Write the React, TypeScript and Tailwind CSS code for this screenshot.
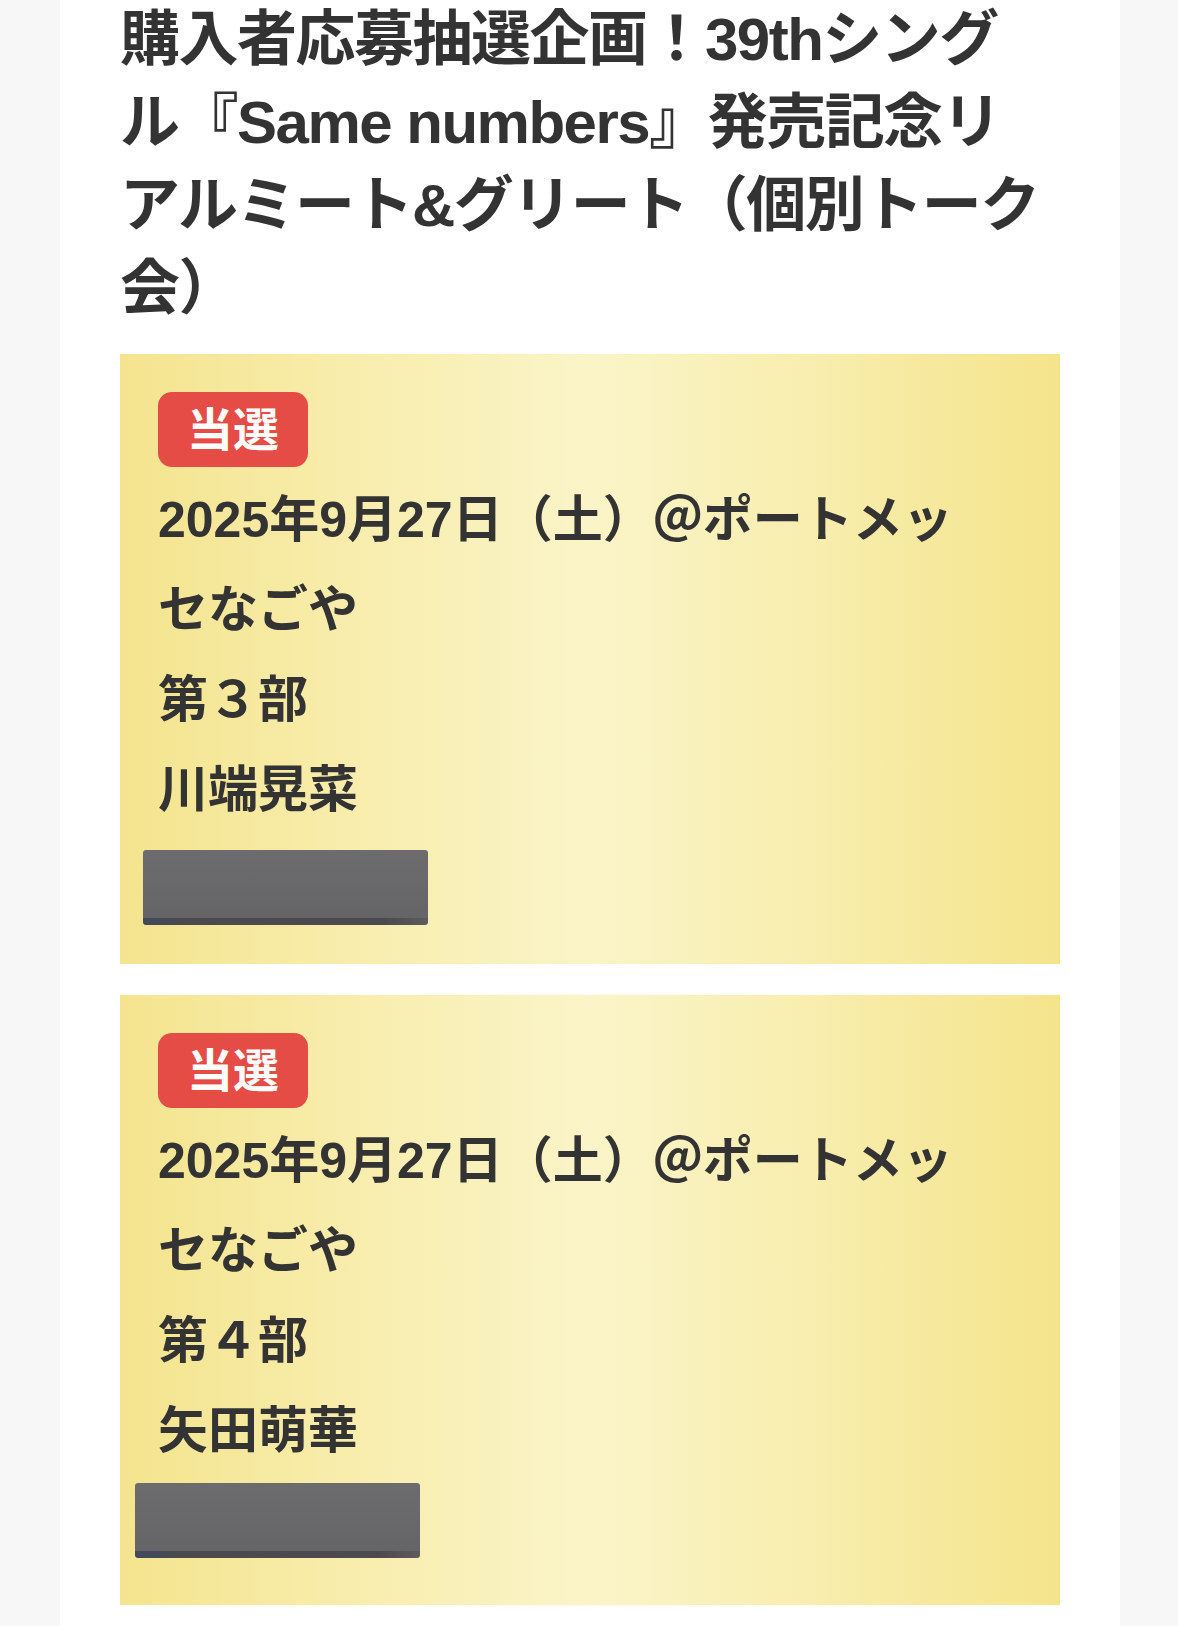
import React from "react";

const FONT = "font-['Liberation_Sans','Noto_Sans_CJK_JP',sans-serif]";

function Card({
  part,
  name,
  redactClass,
  className = "",
}: {
  part: string;
  name: string;
  redactClass: string;
  className?: string;
}) {
  return (
    <div
      className={`bg-[linear-gradient(90deg,#f4e48e_0%,#f8eeb0_28%,#faf4c8_50%,#f8eeb0_72%,#f4e48b_100%)] px-[38px] pt-[38px] pb-[39px] ${className}`}
    >
      <div className="mb-[8px] flex h-[75px] w-[150px] items-center justify-center rounded-[14px] bg-[#e54c45] text-[46px] font-bold leading-none text-white">
        当選
      </div>
      <div className="w-[810px] text-[50px] font-bold leading-[90px] text-[#333333]">
        <p>2025年9月27日（土）＠ポートメッセなごや</p>
        <p>{part}</p>
        <p>{name}</p>
      </div>
      <div className="flex h-[90px] items-end">
        <div className={`flex h-[75px] w-[285px] flex-col overflow-hidden rounded-[3px] ${redactClass}`}>
          <div className="flex-1 bg-[linear-gradient(180deg,#6c6c6e,#656567)]" />
          <div className="h-[7px] bg-[linear-gradient(90deg,#414a5e,#4a4a4f_15%,#4b4b4f_85%,#5c5c5e)]" />
        </div>
      </div>
    </div>
  );
}

export default function App() {
  return (
    <div className={`min-h-screen w-full bg-[#f7f7f7] ${FONT}`}>
      <div className="ml-[60px] h-[1626px] w-[1060px] overflow-hidden bg-white px-[60px]">
        <h1 className="mt-[-2px] w-[930px] text-[60px] font-bold leading-[83px] tracking-[-1.5px] text-[#333333]">
          購入者応募抽選企画！39thシングル『Same numbers』発売記念リアルミート&amp;グリート（個別トーク会）
        </h1>
        <Card part="第３部" name="川端晃菜" redactClass="ml-[-15px]" className="mt-[24px]" />
        <Card part="第４部" name="矢田萌華" redactClass="ml-[-23px] mb-[8px]" className="mt-[31px]" />
      </div>
    </div>
  );
}
